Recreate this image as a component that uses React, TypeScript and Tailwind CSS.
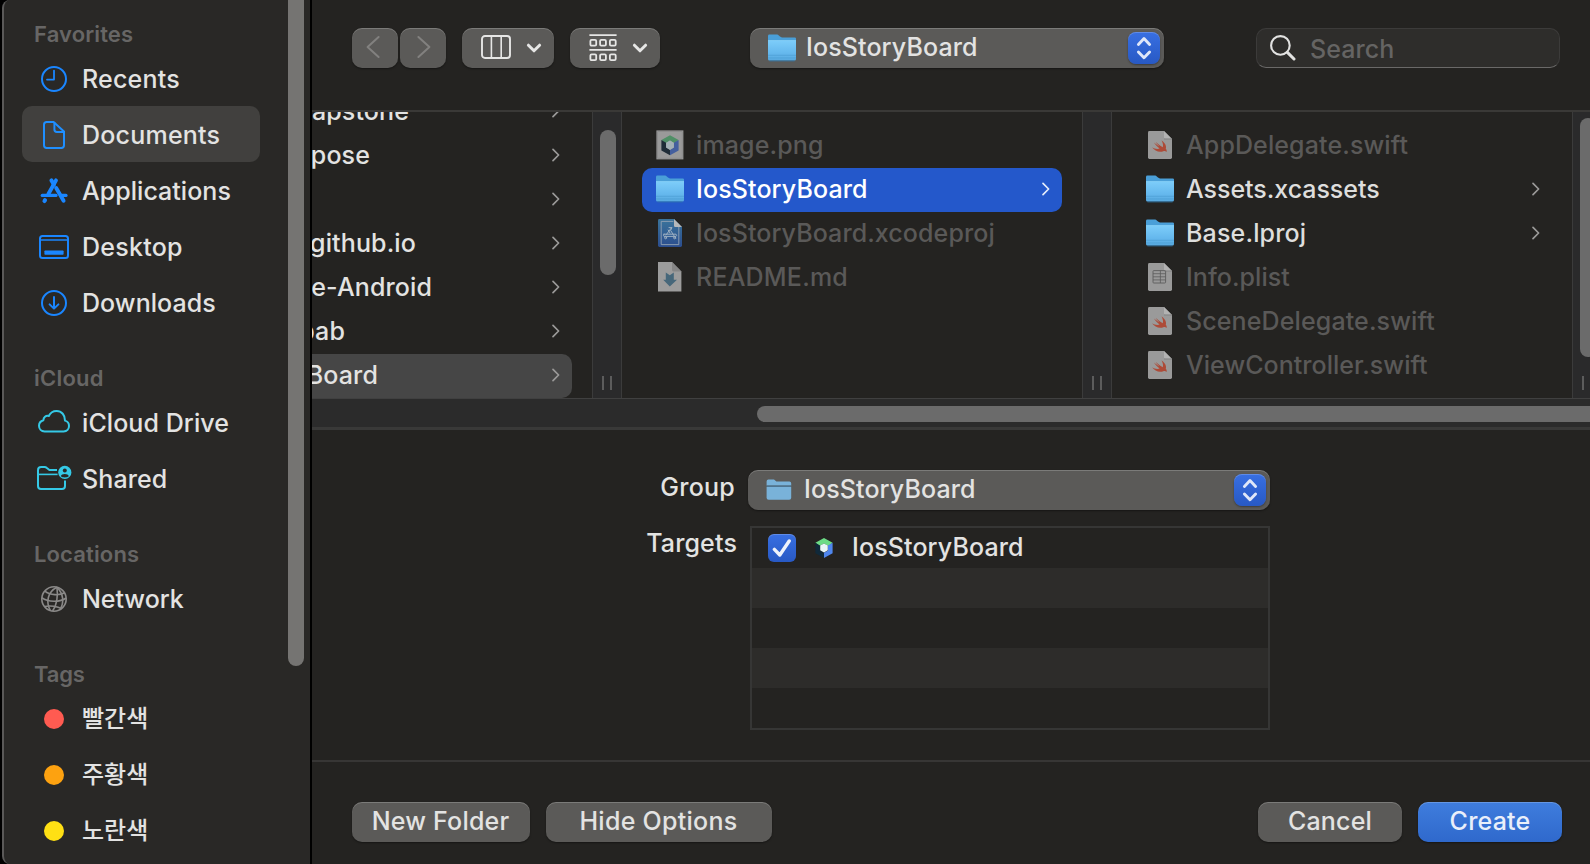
import React from "react";
import type { ReactNode } from "react";
import clsx from "clsx";

/* ---------- Icons ---------- */

const svg = (w: number, h: number, children: ReactNode, className = "") => (
  <svg width={w} height={h} viewBox={`0 0 ${w} ${h}`} fill="none" className={clsx("block shrink-0", className)}>
    {children}
  </svg>
);

const ClockIcon = () =>
  svg(28, 28, (
    <g stroke="#1a86ff" strokeWidth="2" strokeLinecap="round" strokeLinejoin="round">
      <circle cx="14" cy="14" r="12" />
      <path d="M14 5.6V14.6H7" strokeWidth="1.8" />
    </g>
  ));

const DocIcon = () =>
  svg(24, 30, (
    <g stroke="#1f8fff" strokeWidth="2" strokeLinejoin="round">
      <path d="M4.2 2H11.6L22 11.4V25.3Q22 28 19.3 28H4.7Q2 28 2 25.3V4.7Q2 2 4.7 2Z" />
      <path d="M12.4 2.2V9.6Q12.4 12 14.8 12H22" />
    </g>
  ));

const AppsIcon = () =>
  svg(28, 28, (
    <g stroke="#1a86ff" strokeWidth="3.9" strokeLinecap="round">
      <path d="M11.4 3.4L14 7.6" />
      <path d="M16 3.4L8.4 17" />
      <path d="M2.2 18.4H16" strokeWidth="3.2" />
      <path d="M16.2 11L23.6 23.8" />
      <path d="M21.6 18.4H26" strokeWidth="3.2" />
      <path d="M5 23.2L4.5 24" strokeWidth="4.1" />
    </g>
  ));

const DesktopIcon = () =>
  svg(30, 24, (
    <>
      <rect x="1" y="1" width="28" height="22" rx="2.5" stroke="#1a86ff" strokeWidth="2" />
      <path d="M1.5 5H28.5" stroke="#1a86ff" strokeWidth="1.4" />
      <rect x="5.4" y="15.4" width="19.2" height="4.4" rx="0.8" fill="#1a86ff" />
    </>
  ));

const DownloadIcon = () =>
  svg(28, 28, (
    <g stroke="#1a86ff" strokeWidth="2" strokeLinecap="round" strokeLinejoin="round">
      <circle cx="14" cy="14" r="12" />
      <path d="M14 8V19.4M9.6 15.4L14 19.6L18.4 15.4" />
    </g>
  ));

const CloudIcon = () =>
  svg(34, 24, (
    <path
      d="M7.6 22.4H26.6C30 22.4 32 20 32 17C32 14.2 30.2 12.2 28 11.6C28.2 6.2 24.6 2 19.6 2C16 2 13.2 4 11.8 7C8.8 6.2 6.4 8.4 6.4 11.2C3.6 12 2 14 2 16.8C2 20 4.4 22.4 7.6 22.4Z"
      stroke="#35c9e6" strokeWidth="2" strokeLinejoin="round"
    />
  ), "-mt-1");

const SharedIcon = () =>
  svg(36, 26, (
    <>
      <path d="M21 5H13.4L10.6 2.8Q9.8 2 8.6 2H5.2Q2 2 2 5.2V21Q2 24 5 24H26Q29 24 29 21V15.6" stroke="#35c9e6" strokeWidth="2" />
      <path d="M2 9.4H21.6" stroke="#35c9e6" strokeWidth="1.6" />
      <circle cx="28.8" cy="7.4" r="6.6" fill="#35c9e6" />
      <circle cx="28.8" cy="5.4" r="2" fill="#292826" />
      <path d="M24.8 11.2C25.4 8.4 32.2 8.4 32.8 11.2C30.8 12.8 26.8 12.8 24.8 11.2Z" fill="#292826" />
    </>
  ), "-mt-0.5");

const NetworkIcon = () =>
  svg(28, 28, (
    <g stroke="#8a8988" strokeWidth="1.6">
      <circle cx="14" cy="14" r="12.2" />
      <path d="M17 2.3C7.6 7 5.6 17 10.4 25.6" />
      <path d="M17 2.3C17.8 9 17.4 19 12.6 26" />
      <path d="M17 2.3C23.6 8.4 24.2 17.6 20.2 24.4" />
      <path d="M4.8 6.2C10 10.4 20 10.6 24.6 7.8" />
      <path d="M1.8 12.6C8 17.4 20 17.4 26.2 13" />
      <path d="M4.6 21.6C10 20 18 21.6 21.6 23.6" />
    </g>
  ));

const Folder = () =>
  svg(30, 30, (
    <>
      <defs>
        <linearGradient id="folderFront" x1="0" y1="0" x2="0" y2="1">
          <stop offset="0" stopColor="#7dcdfa" />
          <stop offset="0.6" stopColor="#66b9ee" />
          <stop offset="1" stopColor="#58a9df" />
        </linearGradient>
      </defs>
      <path d="M1 3Q1 1.6 2.4 1.6H10.2Q11 1.6 11.8 2.4L13 3.6Q13.8 4.4 15 4.4H27.8Q29 4.4 29 5.6V12H1Z" fill="#4a9fd8" />
      <path d="M1 7.4H29V26Q29 27.6 27.4 27.6H2.6Q1 27.6 1 26Z" fill="url(#folderFront)" />
      <path d="M1 7.6H29" stroke="#8fd6fb" strokeWidth="0.7" />
      <path d="M1 22.3H29M1 24.9H29" stroke="#4c9ed4" strokeWidth="0.7" />
      <path d="M2.4 27.9H27.6" stroke="#3179ab" strokeWidth="0.8" />
    </>
  ));

const FlatFolder = () =>
  svg(26, 22, (
    <>
      <path d="M0.6 2.4Q0.6 0.6 2.4 0.6H8L10.4 2.4H23.4Q25.2 2.4 25.2 4.2V6.4H0.6Z" fill="#79b2d9" />
      <path d="M0.6 8H25.2V18.8Q25.2 20.8 23.2 20.8H2.6Q0.6 20.8 0.6 18.8Z" fill="#79b2d9" />
      <path d="M0.6 7.2H25.2" stroke="#4d7896" strokeWidth="1.4" />
    </>
  ));

type CubeColors = { top?: string; side?: string; dark?: string; core?: string };

const CubeShape = ({ top = "#6ddb86", side = "#4f86ee", dark = "#10293a", core = "#eaf6f8" }: CubeColors) => (
  <>
    <path d="M10 0L18.6 4.8L14.4 8L10 5.4L5.6 8L1.4 4.8Z" fill={top} />
    <path d="M18.6 4.8V15.2L10 20V14.8L14 12.4V7.6Z" fill={side} />
    <path d="M1.4 4.8V15.2L10 20V14.8L6 12.4V7.6Z" fill={dark} />
    <path d="M10 5.4L13.8 7.6V12.2L10 14.6L6.2 12.2V7.6Z" fill={core} />
  </>
);

const Cube = () => svg(20, 20, <CubeShape />);

const ImageFile = () =>
  svg(30, 30, (
    <>
      <rect x="1.4" y="0.4" width="27" height="29" fill="#9a9a9a" />
      <rect x="2.6" y="1.6" width="24.6" height="26.6" stroke="#8b8b8b" strokeWidth="0.8" />
      <g transform="translate(5 5.2)">
        <CubeShape top="#4f8f66" side="#445f9e" dark="#1f2c37" core="#a3b1b6" />
      </g>
    </>
  ));

const Page = ({ fill = "#9a9a9a" }: { fill?: string }) => (
  <>
    <path d="M3 2.4Q3 1 4.4 1H19L27 9V27.6Q27 29 25.6 29H4.4Q3 29 3 27.6Z" fill={fill} />
    <path d="M19 1L27 9H20.2Q19 9 19 7.8Z" fill="#b2b2b2" />
    <path d="M19 8.9H27" stroke="#747474" strokeWidth="0.7" />
  </>
);

const SwiftFile = () =>
  svg(30, 30, (
    <>
      <Page />
      <path
        d="M16.6 10.6C20.6 13.4 21.6 16.6 20.8 18.8C22 20.2 21.8 21.4 21.4 22C20.6 20.8 19.4 20.8 18.4 21.2C14 22.8 9.6 20.8 7 17.2C9.6 18.8 12.6 19.4 14.6 18.4C12 16.4 10.2 14.2 9 12.4C11 14 13.2 15.6 14.2 16.2C12.8 14.8 11.4 13 10.8 12C13 14 15.8 16.2 17.8 17.2C18.4 15.2 17.8 12.8 16.6 10.6Z"
        fill="#ad4b38"
      />
    </>
  ));

const PlistFile = () =>
  svg(30, 30, (
    <>
      <Page />
      <rect x="8" y="8.6" width="12.6" height="12.4" rx="0.8" stroke="#5c5c5c" strokeWidth="0.9" />
      <path d="M8 11.7H20.6M8 14.8H20.6M8 17.9H20.6M15.4 8.6V21" stroke="#5c5c5c" strokeWidth="0.8" />
    </>
  ));

const MarkdownFile = () =>
  svg(30, 30, (
    <>
      <path d="M3 0H17L26.4 9.4V29.6H3Z" fill="#9c9c9c" />
      <path d="M17 0L26.4 9.4H18.4Q17 9.4 17 8Z" fill="#868686" />
      <path d="M10.8 10.6L14.8 13.2L18.8 10.6V17.8H22L14.8 24.4L8.2 17.8H10.8Z" fill="#46677a" />
    </>
  ));

const XcodeFile = () =>
  svg(30, 30, (
    <>
      <defs>
        <linearGradient id="projFill" x1="0" y1="0" x2="0" y2="1">
          <stop offset="0" stopColor="#3a749b" />
          <stop offset="1" stopColor="#2b4d8e" />
        </linearGradient>
      </defs>
      <path d="M3 2.4Q3 1 4.4 1H19L27 9V27.6Q27 29 25.6 29H4.4Q3 29 3 27.6Z" fill="url(#projFill)" />
      <path d="M18.4 3.4H6.2V26.6H23.8V9" stroke="#93a3b3" strokeWidth="0.9" />
      <path d="M19 1L27 9H20.2Q19 9 19 7.8Z" fill="#b6b8ba" />
      <g stroke="#9db0c2" strokeWidth="1" strokeLinecap="round">
        <path d="M14 9.6H17L15.6 12.4L20.6 20.2M16.4 9.8L11 17M13.2 12L15 15" />
        <path d="M9 16.2H21Q22.4 17.4 21 18.4H9Q7.8 17.4 9 16.2Z" />
        <circle cx="10.6" cy="19.8" r="1" />
        <circle cx="19.6" cy="19.8" r="1" />
      </g>
    </>
  ));

const RowChevron = ({ color = "#9b9a99" }: { color?: string }) =>
  svg(9, 14, <path d="M2 1.4L7.6 7L2 12.6" stroke={color} strokeWidth="1.7" strokeLinecap="round" strokeLinejoin="round" />, "-mt-0.5 -mr-px");

const MenuChevron = () =>
  svg(16, 10, <path d="M2.4 2.2L8 7.8L13.6 2.2" stroke="#e6e6e5" strokeWidth="3" strokeLinecap="round" strokeLinejoin="round" />);

const NavChevron = ({ flip = false }: { flip?: boolean }) =>
  svg(16, 24, <path d="M13.6 2L2.6 12L13.6 22" stroke="#82817f" strokeWidth="2" strokeLinecap="round" strokeLinejoin="round" />, flip ? "rotate-180" : "");

const ColumnsIcon = () =>
  svg(30, 24, (
    <g stroke="#e6e6e5" strokeWidth="1.9">
      <rect x="1" y="1" width="28" height="22" rx="3" />
      <path d="M10.4 1V23M20.2 1V23" strokeWidth="1.6" />
    </g>
  ));

const GroupIcon = () =>
  svg(28, 28, (
    <g stroke="#e6e6e5" strokeWidth="1.8">
      <path d="M0.4 1.2H27.6M0.4 15.8H27.6" />
      {[5.9, 20.3].map((y) =>
        [1.4, 11.1, 20.9].map((x) => <rect key={`${x}-${y}`} x={x} y={y} width="5.8" height="5.8" rx="1.2" />)
      )}
    </g>
  ));

const SearchIcon = () =>
  svg(26, 26, (
    <g stroke="#e2e2e1" strokeLinecap="round">
      <circle cx="10.4" cy="10.4" r="9.3" strokeWidth="2.1" />
      <path d="M17.4 17.4L24 24" strokeWidth="3" />
    </g>
  ));

const Stepper = () => (
  <span className="flex h-8 w-8 items-center justify-center rounded-[8px] bg-linear-to-b from-[#386fe2] to-[#2859c4] shadow-[0_1px_2px_rgba(0,0,0,0.35),inset_0_1px_0_rgba(255,255,255,0.2)]">
    {svg(16, 24, (
      <g stroke="#dfe7f8" strokeWidth="2.9" strokeLinecap="round" strokeLinejoin="round">
        <path d="M2.4 8.4L8 2.6L13.6 8.4M2.4 16L8 21.8L13.6 16" />
      </g>
    ))}
  </span>
);

/* ---------- Sidebar ---------- */

type Item = { label: string; icon: ReactNode; cls: string; selected?: boolean };

const dot = (cls: string) => <span className={clsx("h-5 w-5 rounded-full", cls)} />;
const KR = "-mt-[5px] text-[24px] font-medium font-['Noto_Sans_CJK_KR','Inter',sans-serif]";

const sections: { title: string; cls: string; items: Item[] }[] = [
  {
    title: "Favorites",
    cls: "tracking-[0.13px]",
    items: [
      { label: "Recents", icon: <ClockIcon />, cls: "tracking-[0.2px]" },
      { label: "Documents", icon: <DocIcon />, cls: "tracking-[0.22px]", selected: true },
      { label: "Applications", icon: <AppsIcon />, cls: "tracking-[0.03px]" },
      { label: "Desktop", icon: <DesktopIcon />, cls: "tracking-[0.25px]" },
      { label: "Downloads", icon: <DownloadIcon />, cls: "tracking-[0.06px]" },
    ],
  },
  {
    title: "iCloud",
    cls: "tracking-[0.22px]",
    items: [
      { label: "iCloud Drive", icon: <CloudIcon />, cls: "tracking-[0.08px]" },
      { label: "Shared", icon: <SharedIcon />, cls: "tracking-[0.1px]" },
    ],
  },
  {
    title: "Locations",
    cls: "tracking-[0.14px]",
    items: [{ label: "Network", icon: <NetworkIcon />, cls: "tracking-[-0.05px]" }],
  },
  {
    title: "Tags",
    cls: "tracking-[-0.2px]",
    items: [
      { label: "빨간색", icon: dot("bg-[#ff5b51]"), cls: KR },
      { label: "주황색", icon: dot("bg-[#fda210]"), cls: KR },
      { label: "노란색", icon: dot("bg-[#ffe014]"), cls: KR },
    ],
  },
];

function Sidebar() {
  return (
    <aside className="flex h-full w-[312px] shrink-0 border-r-2 border-black bg-black pl-0.5">
      <div className="flex min-w-0 flex-1 overflow-hidden rounded-l-[8px] border-l-2 border-[#5a5958] bg-[#292826]">
        <nav className="flex h-full flex-1 flex-col gap-[30px] pt-4 pl-[18px]">
          {sections.map((s) => (
            <section key={s.title} className="shrink-0">
              <h2 className={clsx("flex h-[34px] items-center pt-0.5 pl-3 text-[22px] leading-none font-semibold text-[#676665]", s.cls)}>
                {s.title}
              </h2>
              {s.items.map((it) => (
                <div key={it.label} className={clsx("flex h-14 w-[238px] items-center gap-2.5 rounded-[10px] pl-3.5", it.selected && "bg-[#41403e]")}>
                  <span className="flex w-9 shrink-0 items-center justify-center pt-0.5">{it.icon}</span>
                  <span className={clsx("pt-0.5 whitespace-nowrap", it.cls)}>{it.label}</span>
                </div>
              ))}
            </section>
          ))}
        </nav>
        <div className="mr-1.5 h-[666px] w-4 shrink-0 rounded-b-full bg-[#757472]" />
      </div>
    </aside>
  );
}

/* ---------- Toolbar ---------- */

const raised =
  "flex h-10 shrink-0 items-center rounded-[10px] bg-[#5b5a58] shadow-[0_1px_2px_rgba(0,0,0,0.4),inset_0_1px_0_rgba(255,255,255,0.2)]";

function Toolbar() {
  return (
    <header className="flex h-28 shrink-0 border-b-2 border-[#3a3937] pt-7 pl-10">
      <button className={clsx(raised, "w-[46px] justify-center pb-0.5 pr-1")}><NavChevron /></button>
      <button className={clsx(raised, "ml-0.5 w-[46px] justify-center pb-0.5 pl-0.5")}><NavChevron flip /></button>
      <button className={clsx(raised, "ml-4 w-[92px] gap-[15px] pl-[19px]")}>
        <span className="-mt-0.5"><ColumnsIcon /></span>
        <MenuChevron />
      </button>
      <button className={clsx(raised, "ml-4 w-[90px] gap-[15px] pl-[19px]")}>
        <GroupIcon />
        <MenuChevron />
      </button>
      <button className={clsx(raised, "ml-[90px] w-[414px] pr-1 pl-[17px]")}>
        <Folder />
        <span className="ml-[9px] pb-[3px] tracking-[0.12px]">IosStoryBoard</span>
        <span className="ml-auto"><Stepper /></span>
      </button>
      <div className="ml-[92px] flex h-10 w-[304px] items-center rounded-[10px] border border-[#3c3b3a] border-b-[#6a6968] bg-[#2e2d2b] pl-[13px]">
        <SearchIcon />
        <span className="ml-3.5 pt-px tracking-[0.08px] text-[#656463]">Search</span>
      </div>
    </header>
  );
}

/* ---------- Column browser ---------- */

type Entry = { name: string; icon: ReactNode; cls: string; folder?: boolean; selected?: boolean };

const parents = [
  { name: "apstone", w: "w-[97px]" },
  { name: "pose", w: "w-[58px]" },
  { name: "", w: "w-0" },
  { name: "github.io", w: "w-[104px]" },
  { name: "e-Android", w: "w-[120px]" },
  { name: "pab", w: "w-[33px]" },
  { name: "Board", w: "w-[66px]", selected: true },
];

const middle: Entry[] = [
  { name: "image.png", icon: <ImageFile />, cls: "tracking-[0.12px]" },
  { name: "IosStoryBoard", icon: <Folder />, cls: "tracking-[0.12px]", folder: true, selected: true },
  { name: "IosStoryBoard.xcodeproj", icon: <XcodeFile />, cls: "tracking-[0.09px]" },
  { name: "README.md", icon: <MarkdownFile />, cls: "tracking-[0.2px]" },
];

const right: Entry[] = [
  { name: "AppDelegate.swift", icon: <SwiftFile />, cls: "tracking-[0.11px]" },
  { name: "Assets.xcassets", icon: <Folder />, cls: "tracking-[-0.04px]", folder: true },
  { name: "Base.lproj", icon: <Folder />, cls: "tracking-[0.16px]", folder: true },
  { name: "Info.plist", icon: <PlistFile />, cls: "tracking-[0.05px]" },
  { name: "SceneDelegate.swift", icon: <SwiftFile />, cls: "tracking-[0.12px]" },
  { name: "ViewController.swift", icon: <SwiftFile />, cls: "tracking-[0.04px]" },
];

function Column({ entries }: { entries: Entry[] }) {
  return (
    <div className="w-[460px] shrink-0 px-5 pt-3">
      {entries.map((e) => (
        <div key={e.name} className={clsx("flex h-11 items-center rounded-[10px] px-[13px]", e.selected && "bg-[#2458cb]")}>
          <span className={e.folder ? "-mt-0.5" : "-mt-[3px]"}>{e.icon}</span>
          <span
            className={clsx(
              "ml-[11px] pb-0.5 whitespace-nowrap",
              e.cls,
              e.selected ? "text-white" : e.folder ? "text-[#dededd]" : "text-[#5a5958]"
            )}
          >
            {e.name}
          </span>
          {e.folder && (
            <span className="ml-auto">
              <RowChevron color={e.selected ? "#e6edfb" : undefined} />
            </span>
          )}
        </div>
      ))}
    </div>
  );
}

function Scroller({ thumb }: { thumb?: string }) {
  return (
    <div className="flex w-[30px] shrink-0 flex-col border-x border-[#3b3b3b] bg-[#2a2a2b] pl-[7px]">
      <div className="flex-1">{thumb && <div className={clsx("w-4 rounded-full bg-[#6b6b6b]", thumb)} />}</div>
      <div className="mb-2 ml-0.5 flex h-3.5 gap-1.5">
        <span className="w-0.5 bg-[#5c5c5c]" />
        <span className="w-0.5 bg-[#5c5c5c]" />
      </div>
    </div>
  );
}

function Browser() {
  return (
    <div className="shrink-0">
      <div className="flex h-[286px] overflow-hidden">
        <div className="w-[280px] shrink-0 overflow-hidden pr-5">
          <div className="-mt-[22px]">
            {parents.map((p, i) => (
              <div key={i} className={clsx("flex h-11 items-center justify-between rounded-r-[10px] pr-[13px]", p.selected && "bg-[#464646]")}>
                <span className={clsx("flex justify-end pb-0.5 tracking-[0.12px] whitespace-nowrap", p.w)}>{p.name}</span>
                <RowChevron />
              </div>
            ))}
          </div>
        </div>
        <Scroller thumb="mt-[18px] h-[145px]" />
        <Column entries={middle} />
        <Scroller />
        <Column entries={right} />
        <Scroller thumb="mt-1.5 h-[239px]" />
      </div>
      <div className="flex h-8 justify-end border-t border-b-[3px] border-t-[#404040] border-b-[#393938] bg-[#2b2b2b] pt-[7px]">
        <div className="h-4 w-[833px] rounded-l-full bg-[#6b6b6b]" />
      </div>
    </div>
  );
}

/* ---------- Options and footer ---------- */

function Options() {
  return (
    <div className="flex h-[330px] shrink-0 flex-col pt-10">
      <div className="flex h-10">
        <span className="w-[423px] pt-0.5 text-right tracking-[0.25px]">Group</span>
        <button className={clsx(raised, "ml-[13px] w-[522px] pr-1 pl-[18px]")}>
          <FlatFolder />
          <span className="ml-3 pb-[3px] tracking-[0.12px]">IosStoryBoard</span>
          <span className="ml-auto"><Stepper /></span>
        </button>
      </div>
      <div className="mt-4 flex">
        <span className="w-[425px] pt-0.5 text-right tracking-[0.15px]">Targets</span>
        <div className="ml-[13px] h-[204px] w-[520px] border-2 border-[#363635]">
          <div className="flex h-10 items-center pl-4">
            <span className="flex h-7 w-7 items-center justify-center rounded-[6px] bg-linear-to-b from-[#386fe2] to-[#2859c4] shadow-[inset_0_1px_0_rgba(255,255,255,0.2)]">
              {svg(20, 20, <path d="M2.4 11.4L7.8 17L17.2 3" stroke="#eef2fb" strokeWidth="3.4" strokeLinecap="round" strokeLinejoin="round" />)}
            </span>
            <span className="ml-[18px]"><Cube /></span>
            <span className="ml-[18px] pb-0.5 tracking-[0.12px]">IosStoryBoard</span>
          </div>
          <div className="h-10 bg-[#2d2c2a]" />
          <div className="h-10" />
          <div className="h-10 bg-[#2d2c2a]" />
          <div className="h-10" />
        </div>
      </div>
    </div>
  );
}

function Footer() {
  return (
    <footer className="flex flex-1 border-t-2 border-[#373635] px-[28px] pt-10 pl-10">
      <button className={clsx(raised, "w-[178px] justify-center pr-px pb-[3px] tracking-[0.2px]")}>New Folder</button>
      <button className={clsx(raised, "ml-4 w-[226px] justify-center pr-px pb-[3px] tracking-[0.28px]")}>Hide Options</button>
      <button className={clsx(raised, "ml-auto w-36 justify-center pb-[3px] tracking-[0.2px]")}>Cancel</button>
      <button className="ml-4 flex h-10 w-36 items-center justify-center rounded-[10px] bg-linear-to-b from-[#3f7ddd] to-[#2f69cc] pb-[3px] tracking-[0.2px] text-[#e9effa] shadow-[0_1px_2px_rgba(0,0,0,0.4),inset_0_1px_0_rgba(255,255,255,0.2)]">
        Create
      </button>
    </footer>
  );
}

export default function App() {
  return (
    <div className="flex h-[864px] w-[1590px] overflow-hidden bg-[#242321] font-['Inter','Noto_Sans_CJK_KR',sans-serif] text-[25px] leading-[30px] font-[450] text-[#e3e3e2]">
      <Sidebar />
      <main className="flex w-[1278px] shrink-0 flex-col overflow-hidden">
        <Toolbar />
        <Browser />
        <Options />
        <Footer />
      </main>
    </div>
  );
}
